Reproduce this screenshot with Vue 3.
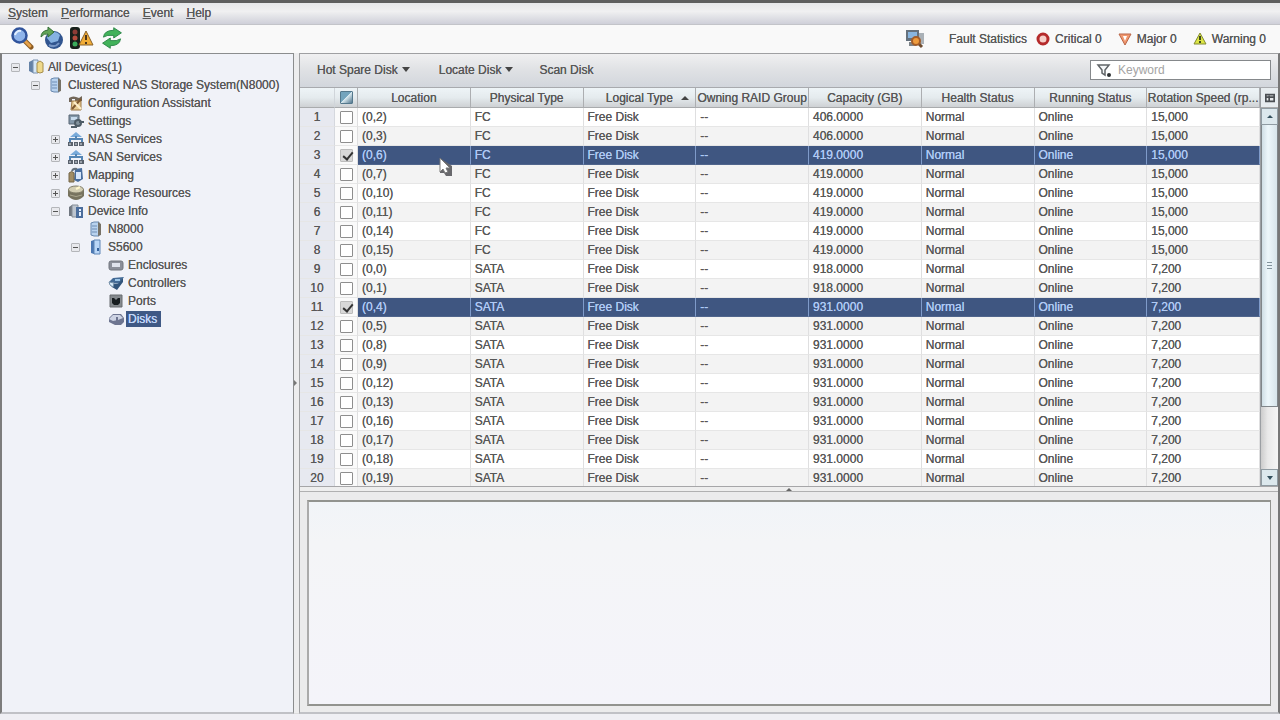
<script setup>
import { ref } from 'vue'

const menus = ['System', 'Performance', 'Event', 'Help']
const tools = [
  { icon: 'search', label: 'Search' },
  { icon: 'discover', label: 'Discover' },
  { icon: 'alarm', label: 'Alarms' },
  { icon: 'refresh', label: 'Refresh' }
]
const faults = [
  { icon: 'critical', text: 'Critical 0', cls: 'critical' },
  { icon: 'major', text: 'Major 0', cls: 'major' },
  { icon: 'warning', text: 'Warning 0', cls: 'warning' }
]

const tree = [
  { d: 0, icon: 'all', label: 'All Devices(1)', box: '-' },
  { d: 1, icon: 'server', label: 'Clustered NAS Storage System(N8000)', box: '-' },
  { d: 2, icon: 'assist', label: 'Configuration Assistant' },
  { d: 2, icon: 'settings', label: 'Settings' },
  { d: 2, icon: 'service', label: 'NAS Services', box: '+' },
  { d: 2, icon: 'service', label: 'SAN Services', box: '+' },
  { d: 2, icon: 'mapping', label: 'Mapping', box: '+' },
  { d: 2, icon: 'storage', label: 'Storage Resources', box: '+' },
  { d: 2, icon: 'info', label: 'Device Info', box: '-' },
  { d: 3, icon: 'server', label: 'N8000' },
  { d: 3, icon: 'array', label: 'S5600', box: '-' },
  { d: 4, icon: 'enclosure', label: 'Enclosures' },
  { d: 4, icon: 'controller', label: 'Controllers' },
  { d: 4, icon: 'port', label: 'Ports' },
  { d: 4, icon: 'disk', label: 'Disks', active: true }
]

const columns = ['Location', 'Physical Type', 'Logical Type', 'Owning RAID Group', 'Capacity (GB)', 'Health Status', 'Running Status', 'Rotation Speed (rp...']
const slots = [2, 3, 6, 7, 10, 11, 14, 15, 0, 1, 4, 5, 8, 9, 12, 13, 16, 17, 18, 19]
const rows = ref(slots.map((s, i) => {
  const fc = i < 8
  return {
    checked: i === 2 || i === 10,
    cells: [
      `(0,${s})`, fc ? 'FC' : 'SATA', 'Free Disk', '--',
      i < 2 ? '406.0000' : fc ? '419.0000' : i < 10 ? '918.0000' : '931.0000',
      'Normal', 'Online', fc ? '15,000' : '7,200'
    ]
  }
}))
const keyword = ref('')
</script>

<template>
  <div class="app">
    <svg class="defs" aria-hidden="true">
      <defs>
        <symbol id="search" viewBox="0 0 24 24">
          <path d="M14 14l7 7" stroke="#8a5a20" stroke-width="5" stroke-linecap="round" />
          <path d="M14 14l6 6" stroke="#e6a14a" stroke-width="3" stroke-linecap="round" />
          <circle cx="9.500" cy="9.500" r="7" fill="#8fb4ea" stroke="#31549c" stroke-width="2.500" />
          <path d="M5 9a5 5 0 0 1 6-4" stroke="#e4f0ff" stroke-width="2" fill="none" />
        </symbol>
        <symbol id="discover" viewBox="0 0 24 24">
          <circle cx="14" cy="14" r="9" fill="#31558f" />
          <path d="M7 12a7 6 0 0 1 13-3l-2 6-7 2z" fill="#86b2e2" />
          <path d="M9 19q6 3 10-2" stroke="#7695c5" stroke-width="2" fill="none" />
          <path d="M1 11q0-6 7-7V1l6 5-6 5V8q-4-1-7 3z" fill="#62a456" stroke="#346e38" />
        </symbol>
        <symbol id="alarm" viewBox="0 0 24 24">
          <rect x="0" y="1" width="10" height="22" rx="3" fill="#17201b" />
          <circle cx="5" cy="6" r="2.500" fill="#8c3c36" /><circle cx="5" cy="12" r="2.500" fill="#b34b3d" /><circle cx="5" cy="18" r="2.500" fill="#3bad5c" />
          <path d="M16 5L23 19H9z" fill="#f2ad37" stroke="#87602a" />
          <path d="M16 9v5m0 2v2" stroke="#4d371c" stroke-width="2" />
        </symbol>
        <symbol id="refresh" viewBox="-2 -2 28 28">
          <path d="M2 11q1-8 12-8V0l9 6-9 6V9q-8-1-12 2z" fill="#42b25a" stroke="#238040" />
          <path d="M22 13q-1 8-12 8v3l-9-6 9-6v3q8 1 12-2z" fill="#42b25a" stroke="#238040" />
        </symbol>
        <symbol id="monitor" viewBox="0 0 20 20">
          <path d="M1 1h13v11H1z" fill="#65717d" /><path d="M3 3h9v6H3z" fill="#88b5df" />
          <path d="M14 4h5v11h-5z" fill="#aab1b7" /><path d="M4 13h7v4H4z" fill="#7d8489" />
          <path d="M13 14l4 4" stroke="#6d4b2f" stroke-width="3" />
          <circle cx="11" cy="12" r="4" fill="#ee9b3d" stroke="#a45c27" stroke-width="2" />
        </symbol>
        <symbol id="critical" viewBox="0 0 14 14">
          <circle cx="7" cy="7" r="5" fill="#f6cfc9" stroke="#b52b2b" stroke-width="3" />
        </symbol>
        <symbol id="major" viewBox="0 0 14 14">
          <path d="M1 2h12L7 13z" fill="#f1986e" stroke="#b96548" /><path d="M5 4h4L7 9z" fill="#fff" />
        </symbol>
        <symbol id="warning" viewBox="0 0 14 14">
          <path d="M7 1l6 11H1z" fill="#dce544" stroke="#838b32" /><path d="M7 4v4m0 1v2" stroke="#3f4720" stroke-width="2" />
        </symbol>
        <symbol id="all" viewBox="0 0 16 16">
          <path d="M1 3l4-2v13l-4-2z" fill="#6482a7" /><path d="M5 1h5v13H5z" fill="#d5e7f7" stroke="#7890ae" />
          <path d="M9 4l3-2 3 2v9l-3 1-3-1z" fill="#efd98c" stroke="#a58d4b" />
        </symbol>
        <symbol id="server" viewBox="0 0 16 16">
          <path d="M3 2l3-1h5v14H6l-3-1z" fill="#b8d2ee" stroke="#6888af" />
          <path d="M10 1l3 2v11l-3 1z" fill="#777267" /><path d="M4 5h5M4 8h5M4 11h5" stroke="#6e8db5" />
        </symbol>
        <symbol id="assist" viewBox="0 0 16 16">
          <path d="M1 3q4-3 10 0l3-2v5H7V4H4v3H1z" fill="#72675a" /><path d="M4 6h9v9H3z" fill="#e7cc93" stroke="#9d7945" />
          <path d="M13 4l-9 10" stroke="#7e582f" stroke-width="2" /><path d="M6 7l7 7" stroke="#fff0ca" stroke-width="2" />
        </symbol>
        <symbol id="settings" viewBox="0 0 16 16">
          <path d="M1 2h10v9H1z" fill="#8498aa" stroke="#596675" /><path d="M3 4h6v3H3z" fill="#c8dbed" />
          <circle cx="10" cy="10" r="3" fill="#83939e" stroke="#4e5c67" stroke-width="2" /><path d="M11 9h5M3 14h6" stroke="#4e5c67" stroke-width="2" />
        </symbol>
        <symbol id="service" viewBox="0 0 16 16">
          <path d="M8 1l6 5H2z" fill="#78aada" /><path d="M8 5v3M2 11V8h12v3" stroke="#5485b4" stroke-width="2" fill="none" />
          <path d="M0 11h5v4H0zM6 11h4v4H6zM11 11h5v4h-5z" fill="#59616c" /><path d="M2 12v2m6-2v2m5-2v2" stroke="#dce4ec" />
        </symbol>
        <symbol id="mapping" viewBox="0 0 16 16">
          <path d="M7 2l7-1 1 11-5 3-4-2z" fill="#496e9e" /><path d="M8 5h5v7H8z" fill="#d7e7fb" />
          <path d="M1 6q3-3 5 0v9H1z" fill="#a18d65" stroke="#756749" /><path d="M4 4q1-3 5-2" stroke="#65717b" stroke-width="2" fill="none" />
        </symbol>
        <symbol id="storage" viewBox="0 0 16 16">
          <path d="M0 4v7q8 8 16 0V4z" fill="#77735f" /><ellipse cx="8" cy="4.500" rx="7.500" ry="3.500" fill="#d3ceb3" stroke="#817d69" />
          <path d="M8 4l4-2" stroke="#fff7cb" stroke-width="2" /><path d="M2 10q6 3 12 0" stroke="#aaa68e" fill="none" />
        </symbol>
        <symbol id="info" viewBox="0 0 16 16">
          <path d="M1 4l3-2v11H1z" fill="#707780" /><path d="M4 2h6v12H4z" fill="#bdc5cf" stroke="#858d96" />
          <path d="M8 4h7v11H8z" fill="#4b6d9c" /><path d="M11 6h2v2h-2zm0 3h2v4h-2z" fill="#e7f1ff" />
        </symbol>
        <symbol id="array" viewBox="0 0 16 16">
          <path d="M3 2l3-1v14l-3-1z" fill="#4c78b3" /><path d="M6 1h6v14H6z" fill="#b9d6f7" stroke="#5f86b6" /><path d="M10 9v3" stroke="#36649f" stroke-width="2" />
        </symbol>
        <symbol id="enclosure" viewBox="0 0 16 16">
          <rect x="1" y="4" width="14" height="9" rx="2" fill="#8b8f99" stroke="#73777f" /><path d="M4 6h8v4H4z" fill="#dfe3ec" />
        </symbol>
        <symbol id="controller" viewBox="0 0 16 16">
          <path d="M5 3l11-1-5 7-10-2z" fill="#446b96" /><path d="M1 8l9 1 5-6v4l-6 8-5-3z" fill="#31547b" /><path d="M1 7l5 1-1 4-3-2z" fill="#d5e9f8" stroke="#7590a8" /><path d="M7 5h5" stroke="#9cc5e7" stroke-width="2" />
        </symbol>
        <symbol id="port" viewBox="0 0 16 16">
          <path d="M2 2h12v12H2z" fill="#858a8e" stroke="#686d70" /><path d="M4 5h2l2 2 2-2h2v5l-2 2H6l-2-2z" fill="#171d20" />
        </symbol>
        <symbol id="disk" viewBox="0 0 16 16">
          <path d="M1 7l4-4h8l3 4v4l-3 3H7l-6-3z" fill="#6d7590" /><path d="M1 8l4-4h7l3 3-5 2-5 1z" fill="#cdd3e3" /><path d="M9 6v5" stroke="#6d7590" stroke-width="2" />
        </symbol>
        <symbol id="filter" viewBox="0 0 16 16">
          <path d="M2 3h11L9 8v5l-3-2V8z" fill="#f6f8f9" stroke="#606467" stroke-width="1.500" /><circle cx="13" cy="13" r="2" fill="#303335" />
        </symbol>
        <symbol id="columns" viewBox="0 0 12 12">
          <path d="M1 2h10v8H1z" fill="#e5e8ea" stroke="#4b4f53" stroke-width="2" /><path d="M1 5h10M5 3v7" stroke="#4b4f53" stroke-width="2" />
        </symbol>
      </defs>
    </svg>

    <nav class="menubar">
      <button v-for="m in menus" :key="m"><u>{{ m[0] }}</u>{{ m.slice(1) }}</button>
    </nav>

    <header class="toolbar">
      <button v-for="t in tools" :key="t.icon" :aria-label="t.label"><svg><use :href="'#' + t.icon" /></svg></button>
      <div class="faults">
        <svg class="monitor"><use href="#monitor" /></svg>
        <span>Fault Statistics</span>
        <span v-for="f in faults" :key="f.icon" class="fault" :class="f.cls"><svg><use :href="'#' + f.icon" /></svg>{{ f.text }}</span>
      </div>
    </header>

    <main class="main">
      <aside class="side">
        <ul class="tree" role="tree">
          <li v-for="n in tree" :key="n.label" role="treeitem" :aria-level="n.d + 1" :class="'depth' + n.d">
            <button v-if="n.box" class="box" :class="{ plus: n.box === '+' }" :aria-label="'Toggle ' + n.label"></button>
            <span v-else class="nobox"></span>
            <svg><use :href="'#' + n.icon" /></svg>
            <span class="label" :class="{ active: n.active }">{{ n.label }}</span>
          </li>
        </ul>
      </aside>
      <div class="vsplit"><i></i></div>

      <section class="content">
        <div class="listpane">
          <div class="actions">
            <button class="hot">Hot Spare Disk<i></i></button>
            <button class="locate">Locate Disk<i></i></button>
            <button>Scan Disk</button>
            <label class="keyword"><svg><use href="#filter" /></svg><input v-model="keyword" type="text" placeholder="Keyword" aria-label="Keyword" /></label>
          </div>
          <div class="grid">
            <div class="viewport">
              <table>
                <colgroup><col class="cnum" /><col class="ccheck" /><col v-for="c in columns" :key="c" /></colgroup>
                <thead>
                  <tr>
                    <th></th>
                    <th><input type="checkbox" class="all" aria-label="Select all" /></th>
                    <th v-for="c in columns" :key="c" :class="{ sorted: c === 'Logical Type' }">{{ c }}<i v-if="c === 'Logical Type'"></i></th>
                  </tr>
                </thead>
                <tbody>
                  <tr v-for="(r, i) in rows" :key="i" :class="{ selected: r.checked }">
                    <td class="num">{{ i + 1 }}</td>
                    <td class="check"><input v-model="r.checked" type="checkbox" :aria-label="'Select disk ' + r.cells[0]" /></td>
                    <td v-for="(c, j) in r.cells" :key="j">{{ c }}</td>
                  </tr>
                </tbody>
              </table>
            </div>
            <div class="scroll">
              <button class="config" aria-label="Configure columns"><svg><use href="#columns" /></svg></button>
              <button class="arrow up" aria-label="Scroll up"></button>
              <div class="track"><div class="thumb"></div></div>
              <button class="arrow down" aria-label="Scroll down"></button>
            </div>
          </div>
        </div>
        <div class="hsplit"><i></i></div>
        <div class="detail"><div class="detailbox"></div></div>
      </section>
    </main>
    <footer class="foot"></footer>

    <svg class="cursor" viewBox="0 0 14 20" aria-hidden="true">
      <path d="M1 1v15h4l2 3h6V9z" fill="#68686c" />
      <path d="M1 1v14l3-3 2 4 3-1-2-4h4z" fill="#fff" stroke="#777" />
    </svg>
  </div>
</template>

<style>
body { margin: 0; overflow: hidden; }
</style>

<style scoped>
* { box-sizing: border-box; }
.app {
  position: relative; height: 100vh; display: flex; flex-direction: column;
  font: 12px/18px "Liberation Sans", Arial, sans-serif; color: #585858;
  text-shadow: 0 0 0 currentColor; background: #f0f0f0;
}
.defs { position: absolute; width: 0; height: 0; }
button { appearance: none; border: 0; padding: 0; margin: 0; background: none; font: inherit; color: inherit; text-shadow: inherit; text-align: left; white-space: nowrap; }
svg { display: block; flex: none; fill: none; }

.menubar { flex: none; height: 25px; display: flex; gap: 13px; padding: 2px 8px 0; border-top: 3px solid #5e5e5e; border-bottom: 1px solid #c3c4c9; background: linear-gradient(#e6e7e9, #f0f0f1 40%, #cfd0d9); line-height: 16px; }
.menubar button { display: flex; line-height: 16px; }
.toolbar { flex: none; height: 28px; display: flex; align-items: center; gap: 6px; padding: 0 14px 2px 10px; background: #f9f9f9; }
.toolbar > button svg { width: 24px; height: 24px; }
.faults { margin-left: auto; display: flex; align-items: center; padding-top: 1px; }
.monitor { width: 20px; height: 20px; margin-right: 24px; }
.fault { display: flex; align-items: center; gap: 5px; margin-left: 16px; }
.fault.critical { margin-left: 9px; }
.fault svg { width: 14px; height: 14px; }

.main { flex: 1; min-height: 0; display: grid; grid-template-columns: 294px 5px minmax(0, 1fr); grid-template-rows: minmax(0, 1fr); }
.side { border: 1px solid #8b8d8e; border-left: 2px solid #7d7d7d; border-bottom: 2px solid #c0c1c6; background: #f0f2f8; overflow: hidden; }
.tree { list-style: none; margin: 0; padding: 4px 0 0 8px; }
.tree li { height: 18px; display: flex; align-items: center; white-space: nowrap; }
.tree svg { width: 16px; height: 16px; margin-right: 2px; }
.depth1 { padding-left: 20px; }
.depth2 { padding-left: 40px; }
.depth3 { padding-left: 60px; }
.depth4 { padding-left: 80px; }
.box, .nobox { width: 9px; height: 9px; margin: 0 8px 0 1px; flex: none; }
.box { border: 1px solid #b4b6ba; border-radius: 1px; background: linear-gradient(#555, #555) center / 5px 1px no-repeat, #e8e9ed; }
.box.plus { background: linear-gradient(#555, #555) center / 5px 1px no-repeat, linear-gradient(#555, #555) center / 1px 5px no-repeat, #e8e9ed; }
.label { line-height: 16px; padding: 0 2px; }
.label.active { background: #3f5985; color: #c2d8fa; padding-right: 4px; }
.vsplit { display: flex; align-items: center; background: #ededee; border-bottom: 1px solid #ddd; }
.vsplit i { border: 3px solid transparent; border-left: 3px solid #777; border-right: 0; }

.content { display: grid; grid-template-rows: minmax(0, 433fr) 5px minmax(0, 220fr); border: 1px solid #9fa0a2; border-right: 2px solid #777; border-bottom: 2px solid #c0c1c6; background: #eaeaea; }
.listpane { display: flex; flex-direction: column; min-height: 0; }
.actions { flex: none; height: 34px; display: flex; align-items: center; padding: 0 7px 2px 17px; background: linear-gradient(#f0f0f1, #dfe1e4 50%, #d2d6dc); border-bottom: 1px solid #a8aaae; }
.actions button { display: flex; align-items: center; gap: 4px; }
.actions .hot { margin-right: 29px; }
.actions .locate { margin-right: 26px; }
.actions i { border: 4px solid transparent; border-top: 5px solid #444; border-bottom: 0; }
.keyword { margin-left: auto; width: 181px; height: 20px; display: flex; align-items: center; border: 1px solid #85888b; background: #fff; padding-left: 5px; gap: 6px; }
.keyword svg { width: 16px; height: 16px; }
.keyword input { flex: 1; min-width: 0; border: 0; padding: 0; outline: 0; background: none; font: inherit; color: #555; }
.keyword input::placeholder { color: #a4a4a4; opacity: 1; }

.grid { flex: 1; min-height: 0; display: grid; grid-template-columns: minmax(0, 1fr) 18px; grid-template-rows: minmax(0, 1fr); border-bottom: 1px solid #a6a6a8; }
.viewport { overflow: hidden; background: #fff; }
table { width: 100%; table-layout: fixed; border-collapse: separate; border-spacing: 0; line-height: 18px; }
.cnum { width: 35px; }
.ccheck { width: 23px; }
th { height: 20px; padding: 0; font-weight: normal; text-align: center; white-space: nowrap; background: linear-gradient(#eef4f7, #e5ebee 50%, #ced1d4); border-right: 1px solid #acaeb1; border-bottom: 1px solid #a9abad; }
th:first-child { border-right-color: #d0d5da; }
th i { display: inline-block; margin-left: 8px; vertical-align: 2px; border: 4px solid transparent; border-bottom: 4px solid #444; border-top: 0; }
th.sorted { padding-left: 16px; }
td { height: 19px; padding: 0 0 0 4px; white-space: nowrap; overflow: hidden; border-right: 1px solid #dfdfe0; border-bottom: 1px solid #e6e6e6; }
tbody tr { background: #fff; }
tbody tr:nth-child(even) { background: #f3f3f3; }
td.num { padding: 0; text-align: center; background: #e7e9f0; border-right-color: #d5d8de; }
td.check { padding: 0; background: #fafafa; }
.selected td:not(.num):not(.check) { background: #3f5681; color: #afcaf4; border-right-color: #7f9bca; border-bottom-color: #50658c; }
input[type="checkbox"] { appearance: none; display: block; width: 13px; height: 13px; margin: 0 auto; border: 1px solid #8e8e8e; border-radius: 1px; background: #fff; }
input[type="checkbox"]:checked { background: #d8d8d8; border-color: #bcbcbc; }
input[type="checkbox"]:checked::after { content: ""; display: block; width: 4px; height: 8px; margin: 0 0 0 4px; border: solid #333; border-width: 0 2px 2px 0; transform: rotate(40deg); }
input.all { background: linear-gradient(135deg, #73a4bd 45%, #d9e9ef 50%, #52778f); border-color: #54788c; }

.scroll { display: flex; flex-direction: column; border-left: 1px solid #9b9fa3; background: #e9e9e9; }
.config { height: 20px; display: flex; align-items: center; justify-content: center; background: #e7ecef; border-bottom: 1px solid #aaa; }
.config svg { width: 10px; height: 10px; }
.arrow { height: 17px; display: flex; align-items: center; justify-content: center; background: #dce8ed; border: 1px solid #8f9ba2; }
.arrow::after { content: ""; border: 3px solid transparent; }
.up::after { border-bottom: 3px solid #34515e; border-top: 0; }
.down::after { border-top: 4px solid #34515e; border-bottom: 0; }
.track { flex: 1; min-height: 0; background: linear-gradient(90deg, #ccc, #e9e9e9 40%, #f5f5f5); }
.thumb { height: 82%; display: flex; align-items: center; justify-content: center; border: 1px solid #80868a; border-top: 0; background: linear-gradient(90deg, #cfdee5, #edf7fb 40%, #d7e4ea); }
.thumb::after { content: ""; width: 5px; height: 7px; background: repeating-linear-gradient(#82939c 0 1px, transparent 1px 3px); }

.hsplit { display: flex; justify-content: center; background: #eee; border-bottom: 1px solid #b0b0b1; }
.hsplit i { height: 0; margin-top: 1px; border: 3px solid transparent; border-bottom: 3px solid #666; border-top: 0; }
.detail { padding: 8px 7px 6px; display: flex; background: #ebebec; }
.detailbox { flex: 1; border: 2px solid #92938f; border-left-color: #aaa; border-right-width: 1px; background: linear-gradient(#f1f4f8, #f4f5f7 20%, #f4f4fa); }
.foot { flex: none; height: 6px; background: #efeff4; }
.cursor { position: absolute; left: 439px; top: 157px; width: 14px; height: 20px; }
</style>
